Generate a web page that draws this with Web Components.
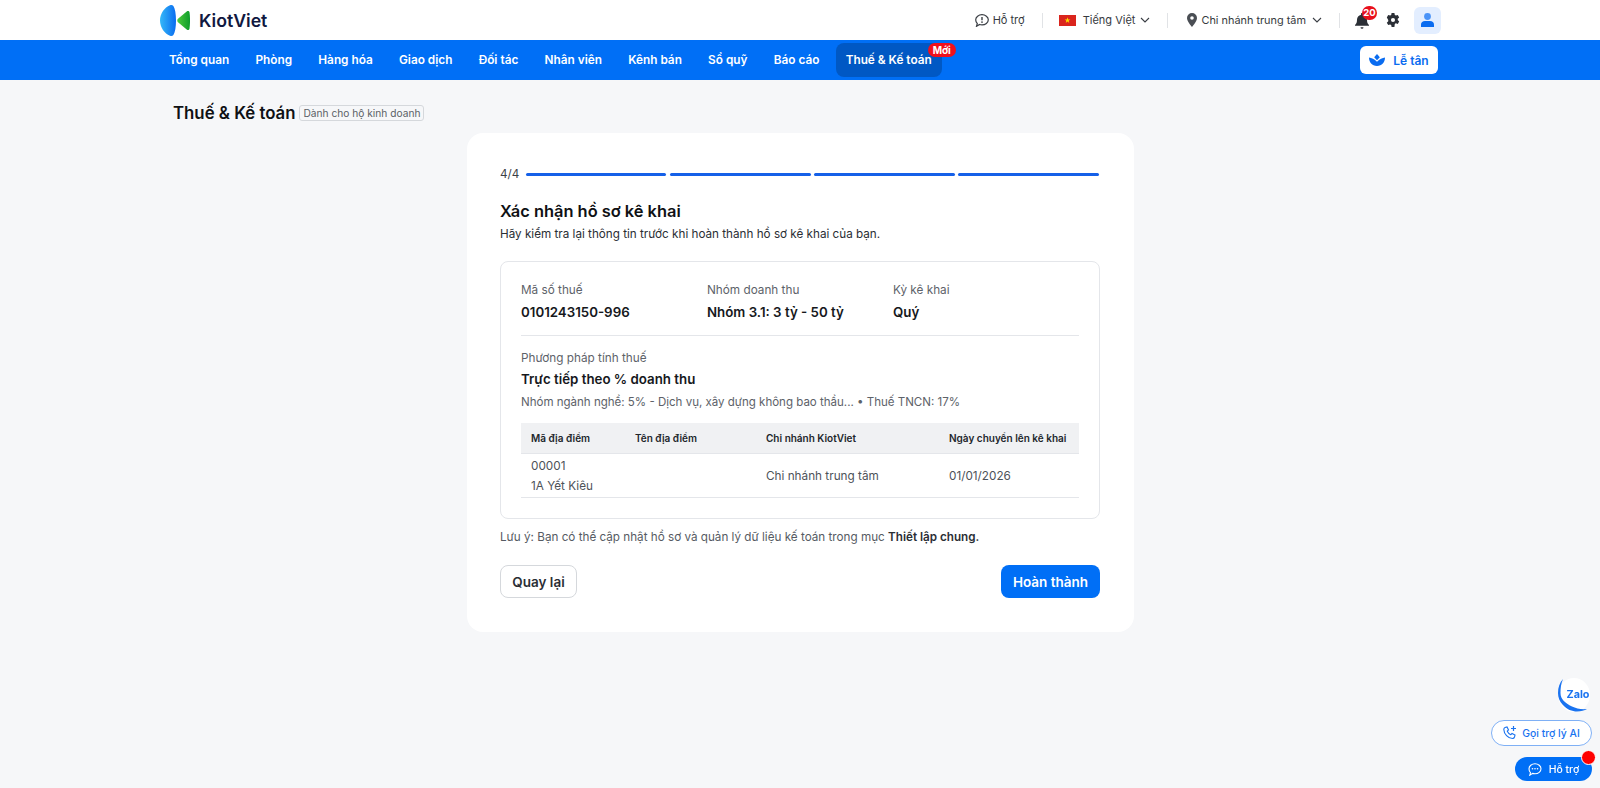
<!DOCTYPE html>
<html lang="vi">
<head>
<meta charset="utf-8">
<title>Thuế & Kế toán</title>
<style>
    html, body { margin: 0; height: 100%; }
    body { background: #f6f7f9; font-family: Inter, "Noto Sans", sans-serif; color: #0f1114; overflow: hidden; }
</style>
</head>
<body>
<kv-topbar></kv-topbar>
<kv-menu></kv-menu>
<kv-page-title></kv-page-title>
<kv-wizard>
    <kv-summary></kv-summary>
</kv-wizard>
<kv-float></kv-float>

<script>
class KvTopbar extends HTMLElement {
    constructor() {
        super()
        const shadowRoot = this.attachShadow({ mode: 'open' })
        shadowRoot.innerHTML = `
            <style>
                :host { display: flex; height: 40px; background: #fff; align-items: center; padding: 0 159px 0 160px; box-sizing: border-box; font-size: 11px; color: #363a40; }
                .logo { display: flex; align-items: center; gap: 9px; font-size: 17.7px; font-weight: 600; color: #10183f; }
                .logo svg { display: block; }
                .right { margin-left: auto; display: flex; align-items: center; }
                .item { display: flex; align-items: center; white-space: nowrap; }
                .sep { width: 1px; height: 15px; background: #e1e3e6; margin: 0 16px 0 17px; }
                .sep.wide { margin-left: 17px; margin-right: 19px; }
                .sep.last { margin-left: 17px; margin-right: 15px; }
                .flag { margin-right: 7px; display: block; }
                .chev { margin-left: 5px; display: block; }
                .branch { font-size: 10.9px; }
                .branch .chev { margin-left: 6px; }
                .bell { position: relative; width: 16px; height: 18px; display: block; margin-right: 15px; }
                .bell svg { display: block; }
                .count { position: absolute; left: 7px; top: -5px; background: #e8101c; color: #fff; font-size: 9.5px; font-weight: 700; line-height: 14px; height: 14px; width: 15px; border-radius: 7px; text-align: center; }
                .avatar { width: 27px; height: 27px; background: #e3eeff; border-radius: 6px; display: flex; align-items: center; justify-content: center; margin-left: 14px; }
            </style>
            <div class="logo">
                <svg width="30" height="31" viewBox="0 0 30 31">
                    <defs>
                        <linearGradient id="lb" x1="0" x2="1" y1="0" y2="0"><stop offset="0" stop-color="#35b8f8"/><stop offset="1" stop-color="#0a6cf0"/></linearGradient>
                        <linearGradient id="lg" x1="0" x2="1" y1="0" y2="0"><stop offset="0" stop-color="#4ecb3c"/><stop offset="1" stop-color="#0d9c2c"/></linearGradient>
                    </defs>
                    <path d="M10 .3C4.500 2.500 0 8.500 0 15.500S4.500 28.500 10 30.700c1.200.5 2.600.3 3.400-.7 1.700-2.800 2.600-8 2.600-14.500S15.100 3.800 13.400 1C12.600 0 11.200-.2 10 .3z" fill="url(#lb)"/>
                    <path d="M27 6.300L18 13.800c-1 .9-1 2.500 0 3.400l9 7.500c1 .6 2.300.1 2.500-1 .7-5 .7-11.400 0-16.400-.2-1.100-1.500-1.600-2.500-1z" fill="url(#lg)"/>
                </svg>
                <span>KiotViet</span>
            </div>
            <div class="right">
                <div class="item">
                    <svg width="14" height="13" viewBox="0 0 14 13" style="margin-right:4px;display:block" fill="none">
                        <path d="M7 .7c3.300 0 6.300 2.200 6.300 5.100S10.300 10.900 7 10.900c-.9 0-1.700-.2-2.400-.4L1.500 12.300l.8-2.800C1.300 8.600.7 7.300.7 5.800.7 2.900 3.700.7 7 .7z" stroke="#3a3e44" stroke-width="1.200"/>
                        <path d="M7 3v3.200" stroke="#3a3e44" stroke-width="1.400"/><circle cx="7" cy="8.100" r=".85" fill="#3a3e44"/>
                    </svg>
                    Hỗ trợ
                </div>
                <div class="sep"></div>
                <div class="item">
                    <svg class="flag" width="17" height="11" viewBox="0 0 17 11">
                        <rect width="17" height="11" fill="#da251d"/>
                        <polygon fill="#ffdf00" points="8.500,2.300 9.200,4.500 11.400,4.500 9.600,5.800 10.300,8 8.500,6.600 6.700,8 7.400,5.800 5.600,4.500 7.800,4.500"/>
                    </svg>
                    Tiếng Việt
                    <svg class="chev" width="10" height="6" viewBox="0 0 10 6" fill="none"><path d="M1 1l4 4 4-4" stroke="#3a3e44" stroke-width="1.100"/></svg>
                </div>
                <div class="sep wide"></div>
                <div class="item branch">
                    <svg width="10" height="14" viewBox="0 0 10 14" style="margin-right:4px;display:block">
                        <path fill-rule="evenodd" fill="#4a4e54" d="M5 0a5 5 0 0 1 5 5c0 3.200-3.600 7.400-5 9-1.400-1.600-5-5.800-5-9a5 5 0 0 1 5-5zm0 3.200a1.800 1.800 0 1 0 0 3.600 1.800 1.800 0 0 0 0-3.600z"/>
                    </svg>
                    Chi nhánh trung tâm
                    <svg class="chev" width="10" height="6" viewBox="0 0 10 6" fill="none"><path d="M1 1l4 4 4-4" stroke="#3a3e44" stroke-width="1.100"/></svg>
                </div>
                <div class="sep last"></div>
                <div class="bell">
                    <svg width="14" height="16" viewBox="0 0 14 16" style="margin-top:2px">
                        <path fill="#2b2f36" d="M7 0c.6 0 1 .4 1 1v.7c2.400.5 4 2.500 4 5 0 2.700.6 3.900 2 5.300v.8H0V12c1.400-1.400 2-2.600 2-5.300 0-2.500 1.600-4.500 4-5V1c0-.6.4-1 1-1z"/>
                        <path fill="#2b2f36" d="M5.500 14.300h3a1.500 1.500 0 0 1-3 0z"/>
                    </svg>
                    <span class="count">20</span>
                </div>
                <svg width="14" height="14" viewBox="0 0 24 24" style="display:block">
                    <path fill="#2b2f36" fill-rule="evenodd" d="M9.600 0h4.800l.7 3.300c.7.300 1.300.6 1.900 1l3.200-1 2.400 4.200-2.500 2.300c.1.800.1 1.600 0 2.400l2.500 2.300-2.400 4.200-3.200-1c-.6.400-1.200.7-1.900 1L14.400 24H9.600l-.7-3.300c-.7-.3-1.300-.6-1.900-1l-3.200 1-2.400-4.200 2.500-2.300c-.1-.8-.1-1.600 0-2.400L1.400 7.500l2.400-4.200 3.200 1c.6-.4 1.200-.7 1.900-1L9.600 0zM12 8.500a3.500 3.500 0 1 0 0 7 3.500 3.500 0 0 0 0-7z"/>
                </svg>
                <div class="avatar">
                    <svg width="13" height="14" viewBox="0 0 13 14">
                        <circle cx="6.500" cy="3.500" r="3.400" fill="#4a93f7"/>
                        <path fill="#0a6cf0" d="M0 14v-2.500C0 9.200 1.700 8 4 8h5c2.300 0 4 1.200 4 3.500V14z"/>
                    </svg>
                </div>
            </div>
        `
    }
}

class KvMenu extends HTMLElement {
    constructor() {
        super()
        const shadowRoot = this.attachShadow({ mode: 'open' })
        const items = ['Tổng quan', 'Phòng', 'Hàng hóa', 'Giao dịch', 'Đối tác', 'Nhân viên', 'Kênh bán', 'Sổ quỹ', 'Báo cáo']
        shadowRoot.innerHTML = `
            <style>
                :host { display: flex; height: 40px; background: #006ff6; align-items: center; padding: 0 162px 0 159px; box-sizing: border-box; color: #fff; font-size: 11.8px; font-weight: 600; }
                nav { display: flex; gap: 6.25px; align-items: center; }
                a { display: block; padding: 0 10px; line-height: 34px; border-radius: 8px; white-space: nowrap; position: relative; }
                a.active { background: #0058c4; }
                .new { position: absolute; top: 0; right: -14px; background: #f0101c; font-size: 10px; font-weight: 700; line-height: 14px; width: 28px; text-align: center; border-radius: 8px; }
                .desk { margin-left: auto; background: #fff; color: #0a6cf0; height: 28px; width: 78px; border-radius: 6px; display: flex; align-items: center; justify-content: center; gap: 8px; font-size: 12px; }
                svg { display: block; }
            </style>
            <nav>
                ${items.map(text => `<a>${text}</a>`).join('')}
                <a class="active">Thuế &amp; Kế toán<span class="new">Mới</span></a>
            </nav>
            <div class="desk">
                <svg width="16" height="12" viewBox="0 0 16 12">
                    <path fill="#0a6cf0" d="M8 0l2.800 3.300L8 6.200 5.200 3.300z"/>
                    <path fill="#0a6cf0" d="M0 3.500c2.500.2 5.500 1.800 8 4.300 2.500-2.500 5.500-4.100 8-4.300 0 4.800-3 8.500-8 8.500S0 8.300 0 3.500z"/>
                </svg>
                <span>Lễ tân</span>
            </div>
        `
    }
}

class KvPageTitle extends HTMLElement {
    constructor() {
        super()
        const shadowRoot = this.attachShadow({ mode: 'open' })
        shadowRoot.innerHTML = `
            <style>
                :host { display: flex; align-items: center; gap: 4px; padding: 0 0 0 173px; margin-top: 22px; height: 22px; }
                h1 { margin: 0; font-size: 16.8px; font-weight: 600; color: #0f1114; white-space: nowrap; }
                span { font-size: 10.2px; color: #5a5f66; border: 1px solid #d5d8dc; border-radius: 3px; line-height: 14px; padding: 0 3px; white-space: nowrap; }
            </style>
            <h1>Thuế &amp; Kế toán</h1>
            <span>Dành cho hộ kinh doanh</span>
        `
    }
}

class KvWizard extends HTMLElement {
    constructor() {
        super()
        const shadowRoot = this.attachShadow({ mode: 'open' })
        shadowRoot.innerHTML = `
            <style>
                :host { display: block; box-sizing: border-box; width: 667px; margin: 9px 0 0 467px; height: 499px; background: #fff; border-radius: 16px; padding: 33px 34px 33px 33px; }
                .steps { display: flex; align-items: center; height: 16px; font-size: 11.7px; color: #3b3f46; padding-right: 1px; }
                .steps span { margin-right: 6.500px; }
                .steps i { flex: 1; height: 3px; background: #1560e8; border-radius: 2px; margin-right: 3.500px; }
                .steps i:last-child { margin-right: 0; }
                h2 { margin: 18px 0 0; font-size: 16.4px; line-height: 22px; font-weight: 600; color: #0f1114; }
                p { margin: 4px 0 0; font-size: 11.7px; line-height: 16px; color: #2a2e34; }
                .note { margin: 10px 0 0; color: #565b63; }
                .note b { font-weight: 600; color: #2a2e34; }
                .actions { display: flex; justify-content: space-between; margin-top: 20px; }
                button { font: inherit; height: 33px; box-sizing: border-box; border-radius: 8px; font-size: 13.500px; font-weight: 600; padding: 0; }
                .back { width: 77px; background: #fff; border: 1px solid #d5d8dc; color: #2a2e34; }
                .done { width: 99px; background: #006ff6; border: 0; color: #fff; }
                ::slotted(*) { margin-top: 19px; }
            </style>
            <div class="steps"><span>4/4</span><i></i><i></i><i></i><i></i></div>
            <h2>Xác nhận hồ sơ kê khai</h2>
            <p>Hãy kiểm tra lại thông tin trước khi hoàn thành hồ sơ kê khai của bạn.</p>
            <slot></slot>
            <p class="note">Lưu ý: Bạn có thể cập nhật hồ sơ và quản lý dữ liệu kế toán trong mục <b>Thiết lập chung.</b></p>
            <div class="actions">
                <button class="back">Quay lại</button>
                <button class="done">Hoàn thành</button>
            </div>
        `
    }
}

class KvSummary extends HTMLElement {
    constructor() {
        super()
        const shadowRoot = this.attachShadow({ mode: 'open' })
        shadowRoot.innerHTML = `
            <style>
                :host { display: block; box-sizing: border-box; height: 258px; border: 1px solid #e4e6ea; border-radius: 8px; padding: 19px 20px 20px; font-size: 11.75px; color: #5d6269; }
                .cols { display: grid; grid-template-columns: repeat(3, 186px); height: 54px; border-bottom: 1px solid #e4e6ea; box-sizing: content-box; }
                .label { line-height: 18px; }
                .val { font-size: 13.3px; font-weight: 600; color: #16181c; line-height: 20px; margin-top: 3px; }
                .method { margin-top: 13px; }
                .method .val { margin-top: 2px; }
                .hint { line-height: 18px; margin-top: 4px; font-size: 11.53px; }
                table { border-collapse: collapse; width: 558px; margin-top: 12px; table-layout: fixed; }
                th { background: #f0f1f3; height: 30px; padding: 1px 0 0 10px; font-size: 10px; font-weight: 600; color: #22262b; text-align: left; border-bottom: 1px solid #e4e6ea; box-sizing: border-box; }
                td { padding: 2px 0 0 10px; height: 44px; font-size: 11.75px; color: #4d5259; border-bottom: 1px solid #e4e6ea; box-sizing: border-box; }
                td div { line-height: 20px; }
            </style>
            <div class="cols">
                <div><div class="label">Mã số thuế</div><div class="val">0101243150-996</div></div>
                <div><div class="label">Nhóm doanh thu</div><div class="val">Nhóm 3.1: 3 tỷ - 50 tỷ</div></div>
                <div><div class="label">Kỳ kê khai</div><div class="val">Quý</div></div>
            </div>
            <div class="method">
                <div class="label">Phương pháp tính thuế</div>
                <div class="val">Trực tiếp theo % doanh thu</div>
                <div class="hint">Nhóm ngành nghề: 5% - Dịch vụ, xây dựng không bao thầu... • Thuế TNCN: 17%</div>
            </div>
            <table>
                <colgroup><col style="width:104px"><col style="width:131px"><col style="width:183px"><col style="width:140px"></colgroup>
                <tr><th>Mã địa điểm</th><th>Tên địa điểm</th><th>Chi nhánh KiotViet</th><th>Ngày chuyển lên kê khai</th></tr>
                <tr><td><div>00001</div><div>1A Yết Kiêu</div></td><td></td><td>Chi nhánh trung tâm</td><td>01/01/2026</td></tr>
            </table>
        `
    }
}

class KvFloat extends HTMLElement {
    constructor() {
        super()
        const shadowRoot = this.attachShadow({ mode: 'open' })
        shadowRoot.innerHTML = `
            <style>
                :host { position: fixed; right: 8px; bottom: 7px; display: flex; flex-direction: column; align-items: flex-end; font-size: 10.4px; font-weight: 500; }
                svg { display: block; }
                .zalo { width: 32px; height: 34px; margin-right: 2px; position: relative; color: #1a73f0; font-weight: 700; font-size: 10.8px; display: flex; align-items: center; justify-content: center; background: #fff; border-radius: 50%; }
                .zalo svg { position: absolute; left: 0; top: 0; }
                .zalo span { position: relative; left: 4px; top: -1px; }
                .ai { margin-top: 8px; width: 101px; height: 26px; box-sizing: border-box; border: 1px solid #7fb0f5; background: #fff; color: #1a73f0; border-radius: 13px; display: flex; align-items: center; justify-content: center; gap: 5px; }
                .help { margin-top: 11px; width: 77px; height: 24px; background: #006ff6; color: #fff; border-radius: 12px; display: flex; align-items: center; justify-content: center; gap: 7px; position: relative; }
                .dot { position: absolute; right: -4px; top: -7px; width: 13px; height: 13px; background: #f00; border: 1px solid #fff; border-radius: 50%; }
            </style>
            <div class="zalo">
                <svg width="32" height="34" viewBox="0 0 32 34"><path fill="#1a73f0" d="M5 1C1.500 5 0 9.500 0 15c0 4.500 1.500 8.500 4.500 11.500C9 31.500 14 33.500 19 33.500c4 0 7.500-1 10-2.500-6 .5-11-.5-15-2.500C7 25 2.500 21 2.500 15 2.500 10 3 5.500 5 1z"/></svg>
                <span>Zalo</span>
            </div>
            <div class="ai">
                <svg width="14" height="14" viewBox="0 0 14 14" fill="none">
                    <path d="M2 1.500l2-.5 1.500 3-1.200 1.200c.7 1.500 2 2.800 3.500 3.500L9 7.500l3 1.500-.5 2c-.3 1-1 1.500-2 1.500C5 12.500 1 8 .8 3.500c0-1 .4-1.700 1.200-2z" stroke="#1a73f0" stroke-width="1.100"/>
                    <path d="M10.500 0v5M8 2.500h5" stroke="#1a73f0" stroke-width="1.200"/>
                </svg>
                <span>Gọi trợ lý AI</span>
            </div>
            <div class="help">
                <svg width="14" height="13" viewBox="0 0 14 13" fill="none">
                    <path d="M7 .8c3.300 0 6 2.200 6 5s-2.700 5-6 5c-.9 0-1.700-.2-2.400-.4L1.800 12.200l.7-2.500C1.500 8.800 1 7.400 1 5.800c0-2.800 2.700-5 6-5z" stroke="#fff" stroke-width="1.100"/>
                    <circle cx="4.500" cy="5.800" r=".8" fill="#fff"/><circle cx="7" cy="5.800" r=".8" fill="#fff"/><circle cx="9.500" cy="5.800" r=".8" fill="#fff"/>
                </svg>
                <span>Hỗ trợ</span>
                <div class="dot"></div>
            </div>
        `
    }
}

customElements.define('kv-topbar', KvTopbar)
customElements.define('kv-menu', KvMenu)
customElements.define('kv-page-title', KvPageTitle)
customElements.define('kv-wizard', KvWizard)
customElements.define('kv-summary', KvSummary)
customElements.define('kv-float', KvFloat)
</script>
</body>
</html>
